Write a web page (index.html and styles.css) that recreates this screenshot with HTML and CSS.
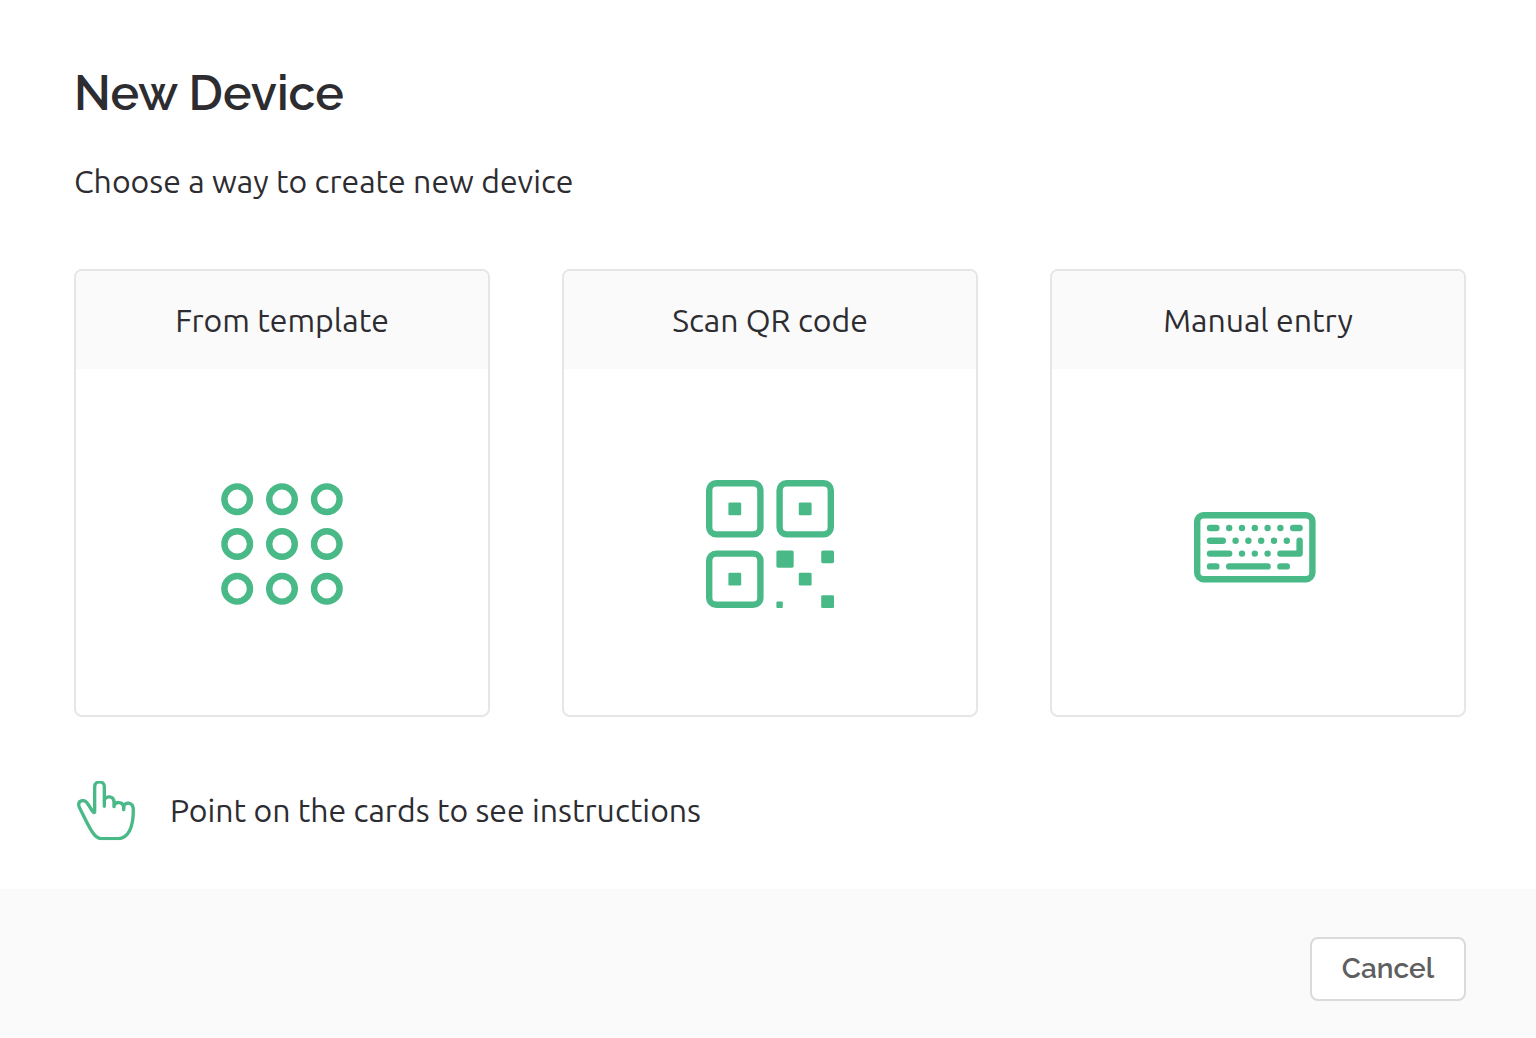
FILE: index.html
```
<!DOCTYPE html>
<html lang="en">
<head>
<meta charset="utf-8">
<meta name="viewport" content="width=device-width, initial-scale=1">
<title>New Device</title>
<link rel="stylesheet" href="styles.css">
</head>
<body>
<main class="content">
  <h1 class="title">New Device</h1>
  <p class="subtitle">Choose a way to create new device</p>
  <div class="cards">
    <button type="button" class="card">
      <span class="card-title">From template</span>
      <span class="card-body">
        <svg class="card-icon" viewBox="0 0 40 40" fill="none" stroke="currentColor" stroke-width="2" aria-hidden="true">
          <circle cx="6" cy="6" r="4"/><circle cx="20" cy="6" r="4"/><circle cx="34" cy="6" r="4"/>
          <circle cx="6" cy="20" r="4"/><circle cx="20" cy="20" r="4"/><circle cx="34" cy="20" r="4"/>
          <circle cx="6" cy="34" r="4"/><circle cx="20" cy="34" r="4"/><circle cx="34" cy="34" r="4"/>
        </svg>
      </span>
    </button>
    <button type="button" class="card">
      <span class="card-title">Scan QR code</span>
      <span class="card-body">
        <svg class="card-icon" viewBox="0 0 40 40" fill="currentColor" aria-hidden="true">
          <g fill="none" stroke="currentColor" stroke-width="2">
            <rect x="1" y="1" width="16" height="16" rx="2.2"/>
            <rect x="23" y="1" width="16" height="16" rx="2.2"/>
            <rect x="1" y="23" width="16" height="16" rx="2.2"/>
          </g>
          <rect x="7" y="7" width="4" height="4" rx=".4"/>
          <rect x="29" y="7" width="4" height="4" rx=".4"/>
          <rect x="7" y="29" width="4" height="4" rx=".4"/>
          <rect x="22" y="22" width="5.4" height="5.4" rx=".5"/>
          <rect x="36" y="22" width="4" height="4" rx=".5"/>
          <rect x="29" y="29" width="4" height="4" rx=".4"/>
          <rect x="22" y="38" width="2" height="2" rx=".3"/>
          <rect x="36" y="36" width="4" height="4" rx=".4"/>
        </svg>
      </span>
    </button>
    <button type="button" class="card">
      <span class="card-title">Manual entry</span>
      <span class="card-body">
        <svg class="card-icon" viewBox="0 0 40 40" fill="none" stroke="currentColor" stroke-width="2" stroke-linecap="round" aria-hidden="true">
          <rect x="1" y="11" width="36" height="20" rx="2"/>
          <path d="M5 15h2M11 15h0M15 15h0M19 15h0M23 15h0M27 15h0M31 15h2"/>
          <path d="M5 19h4M13 19h0M17 19h0M21 19h0M25 19h0M29 19h0"/>
          <path d="M5 23h6M15 23h0M19 23h0M23 23h0M27 23h6v-4" stroke-linejoin="round"/>
          <path d="M5 27h2M11 27h12M27 27h2"/>
        </svg>
      </span>
    </button>
  </div>
  <p class="hint">
    <svg class="hint-icon" viewBox="42 24 192 192" fill="none" stroke="currentColor" stroke-width="10" stroke-linecap="round" stroke-linejoin="round" aria-hidden="true">
      <clipPath id="hand-clip"><rect x="42" y="33" width="192" height="178"/></clipPath>
      <g clip-path="url(#hand-clip)">
        <path d="M133 109V50C133 31 104 31 104 50V126Q101 130 97 123L83 101C74 86 56 91 56 104C56 109 61 118 65 126C78 152 88 174 99 189C108 202 114 206 126 206H174C205 206 220 172 220 120C220 94 193 94 191 111V119"/>
        <path d="M133 91C136 76 162 76 162 97V110M162 108C165 93 190 94 191 112"/>
      </g>
    </svg>
    <span>Point on the cards to see instructions</span>
  </p>
</main>
<footer class="footer">
  <button type="button" class="cancel">Cancel</button>
</footer>
</body>
</html>
```
FILE: styles.css
```
* { box-sizing: border-box; }

body {
  display: flex;
  flex-direction: column;
  min-height: 100vh;
  margin: 0;
  background: #fff;
  color: #2d2c31;
  font: 32px/40px Ubuntu, "Noto Sans", sans-serif;
}

.content {
  flex: 1;
  padding: 61px 70px 44px 74px;
}

.title {
  margin: 0 0 36px;
  font: 600 48px/64px Raleway, Inter, sans-serif;
}

.subtitle { margin: 0 0 68px; }

.cards {
  display: grid;
  grid-template-columns: repeat(3, 1fr);
  gap: 72px;
}

.card {
  display: flex;
  flex-direction: column;
  min-height: 448px;
  padding: 0;
  overflow: hidden;
  border: 2px solid #e6e6e6;
  border-radius: 8px;
  background: #fff;
  color: inherit;
  font: inherit;
  cursor: pointer;
}

.card-title {
  width: 100%;
  padding: 29px 16px;
  background: #fafafa;
}

.card-body {
  width: 100%;
  padding: 111px 0 107px;
  color: #49b987;
}

.card-icon {
  display: block;
  width: 128px;
  height: 128px;
  margin: 0 auto;
}

.hint {
  display: flex;
  align-items: center;
  gap: 32px;
  margin: 61px 0 0;
}

.hint-icon {
  flex: none;
  width: 64px;
  height: 64px;
  color: #49b987;
}

.footer {
  display: flex;
  justify-content: flex-end;
  padding: 48px 70px 37px;
  background: #fafafa;
}

.cancel {
  min-width: 156px;
  height: 64px;
  padding: 0 28px;
  border: 2px solid #dadada;
  border-radius: 8px;
  background: #fff;
  color: #5f5f62;
  font: 600 28px/32px Raleway, Inter, sans-serif;
  cursor: pointer;
}
```
